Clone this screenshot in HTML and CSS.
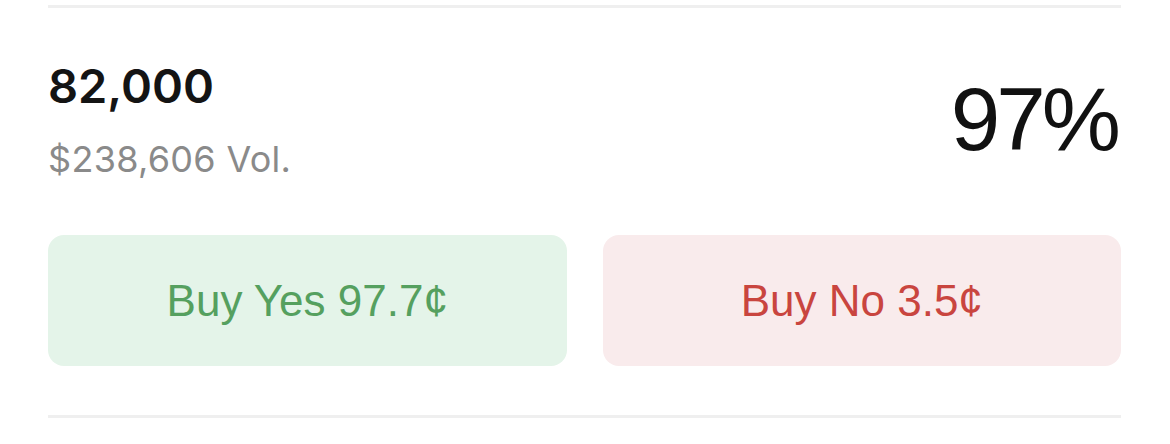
FILE: index.html
```html
<!DOCTYPE html>
<html lang="en">
<head>
    <meta charset="UTF-8">
    <title>Market - 82,000</title>
    <link rel="stylesheet" href="styles.css">
</head>
<body>
    <!-- Market Row -->
    <div class="market">
        <div class="rule"></div>

        <div class="head">
            <div class="info">
                <div class="strike">82,000</div>
                <div class="volume">$238,606 Vol.</div>
            </div>
            <div class="chance">97%</div>
        </div>

        <div class="actions">
            <button class="buy buy-yes">Buy Yes 97.7¢</button>
            <button class="buy buy-no">Buy No 3.5¢</button>
        </div>

        <div class="rule rule-bottom"></div>
    </div>
</body>
</html>
```

FILE: styles.css
```css
body {
    margin: 0;
    padding: 0;
    background-color: #fff;
    font-family: Inter, 'Liberation Sans', Arial, sans-serif;
    color: #111;
}
/* Market Row */
.market {
    padding: 5px 49px 0 48px;
}
.rule {
    height: 3px;
    background-color: #efefef;
}
.rule-bottom {
    margin-top: 49px;
}
/* Header */
.head {
    display: flex;
    justify-content: space-between;
    align-items: center;
    padding-top: 54px;
}
.strike {
    font-size: 47px;
    line-height: 1;
    font-weight: 600;
    color: #141414;
}
.volume {
    margin-top: 32px;
    font-size: 36px;
    line-height: 1;
    letter-spacing: 0.3px;
    color: #8a8a8a;
}
.chance {
    font-family: 'Liberation Sans', Arial, sans-serif;
    font-size: 89px;
    line-height: 1;
    letter-spacing: -4px;
    padding-right: 4px;
    color: #111;
}
/* Buy Buttons */
.actions {
    display: grid;
    grid-template-columns: 1fr 1fr;
    gap: 36px;
    margin-top: 58px;
}
.buy {
    height: 131px;
    border: none;
    border-radius: 16px;
    font-family: 'Liberation Sans', Arial, sans-serif;
    font-size: 44px;
    cursor: pointer;
}
.buy-yes {
    background-color: #e4f4e9;
    color: #55a05f;
}
.buy-no {
    background-color: #f9ebec;
    color: #c9453f;
}
```
